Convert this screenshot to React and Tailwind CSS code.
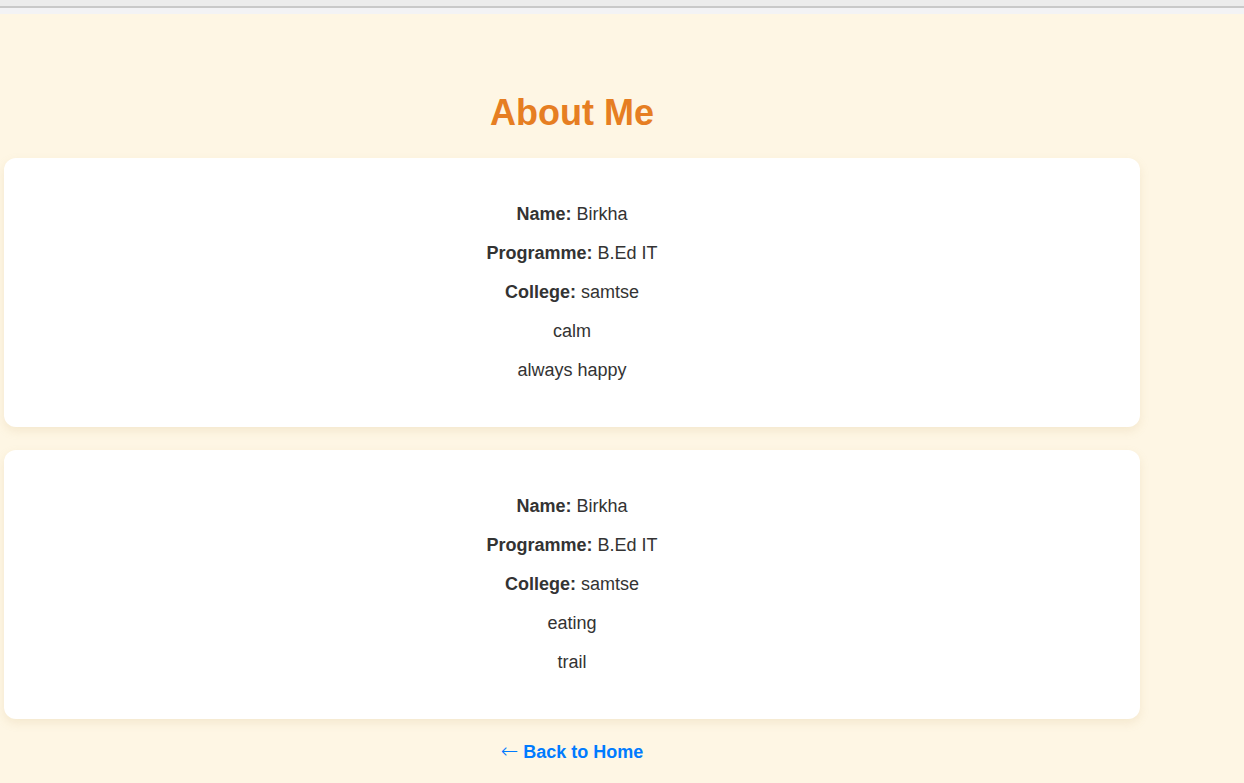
export default function App() {
  const cards = [
    { extra: ['calm', 'always happy'] },
    { extra: ['eating', 'trail'] },
  ]

  return (
    <div className="min-h-[783px] bg-[#fef6e4] font-['Liberation_Sans',Arial,sans-serif] text-[#333]">
      {/* browser chrome strip */}
      <div className="h-[6px] bg-[#ececec]" />
      <div className="h-[2px] bg-[#c9c9c9]" />
      <div className="h-[6px] bg-[#f3f3f5]" />

      <div className="w-[1144px] flex flex-col items-center">
        <h1 className="mt-[78px] text-[36px] leading-[41px] font-bold text-[#e67e22]">About Me</h1>

        <div className="mt-[25px] w-[1136px] flex flex-col gap-[23px]">
          {cards.map((card, i) => (
            <div
              key={i}
              className="bg-white rounded-[12px] shadow-[0_4px_10px_rgba(200,170,110,0.18)] pt-[46px] pb-[46px] flex flex-col items-center gap-[18px] text-[18px] leading-[21px]"
            >
              <p><span className="font-bold">Name:</span> Birkha</p>
              <p><span className="font-bold">Programme:</span> B.Ed IT</p>
              <p><span className="font-bold">College:</span> samtse</p>
              {card.extra.map((t) => (
                <p key={t}>{t}</p>
              ))}
            </div>
          ))}
        </div>

        <a href="#" className="mt-[22px] text-[18px] leading-[21px] font-bold text-[#007bff]">
          <span className="font-['DejaVu_Sans_ExtraLight','DejaVu_Sans',sans-serif] font-extralight text-[21px]">←</span> Back to Home
        </a>
      </div>
    </div>
  )
}
